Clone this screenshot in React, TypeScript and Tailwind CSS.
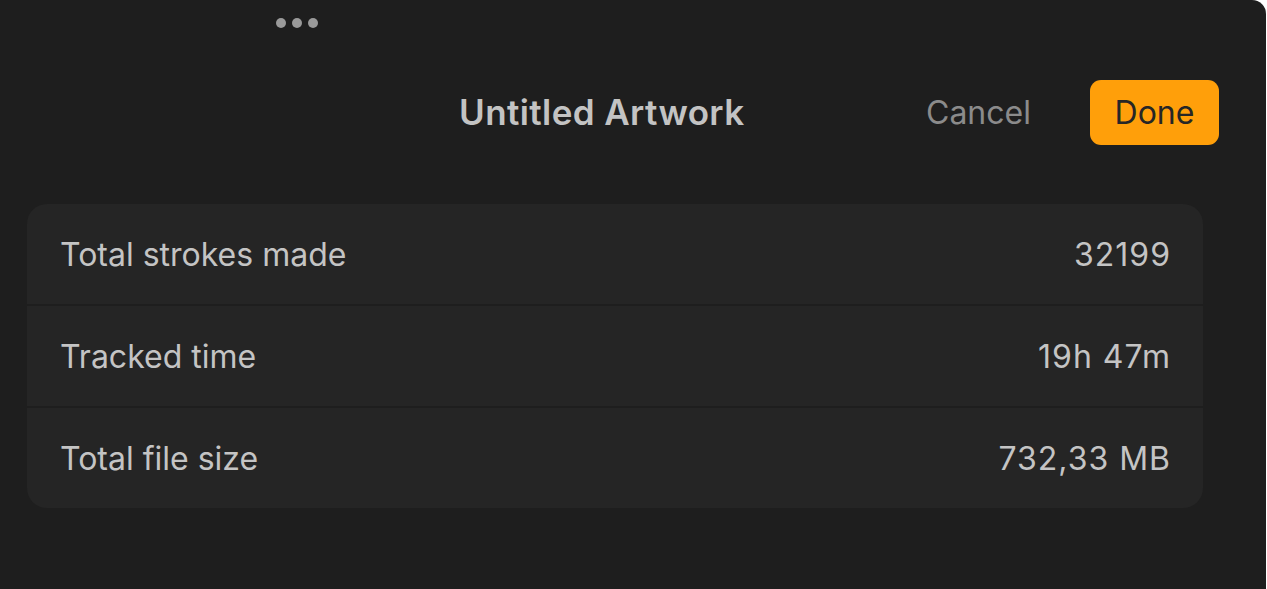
export default function App() {
  const rows = [
    { label: 'Total strokes made', value: '32199' },
    { label: 'Tracked time', value: '19h 47m' },
    { label: 'Total file size', value: '732,33 MB' },
  ]
  return (
    <div className="w-[1267px] h-[589px] bg-white" style={{ fontFamily: 'Inter, "Noto Sans", sans-serif' }}>
      <div className="flex h-full w-[1266px] flex-col bg-[#1e1e1e] rounded-tr-[14px]">
        <div className="flex gap-[6px] pl-[276px] pt-[18px]">
          <span className="h-[10px] w-[10px] rounded-full bg-[#9a9a9a]" />
          <span className="h-[10px] w-[10px] rounded-full bg-[#9a9a9a]" />
          <span className="h-[10px] w-[10px] rounded-full bg-[#9a9a9a]" />
        </div>
        <div className="mt-[52px] flex h-[65px] items-center">
          <div className="ml-[459px] w-[467px] text-[35px] font-semibold tracking-[0.4px] text-[#c3c3c3]">Untitled Artwork</div>
          <div className="w-[164px] text-[32px] text-[#8b8b8b]">Cancel</div>
          <button className="flex h-[65px] w-[129px] items-center justify-center rounded-[11px] bg-[#ff9f0a] text-[32px] text-[#262626]">
            Done
          </button>
        </div>
        <div className="mx-[27px] mt-[59px] flex w-[1176px] flex-col gap-[2px] overflow-hidden rounded-[20px]">
          {rows.map((r) => (
            <div key={r.label} className="flex h-[100px] items-center justify-between bg-[#252525] pl-[33px] pr-[32px] pt-[2px] text-[32px] text-[#c4c4c4]">
              <span>{r.label}</span>
              <span className="tracking-[1px]">{r.value}</span>
            </div>
          ))}
        </div>
      </div>
    </div>
  )
}
